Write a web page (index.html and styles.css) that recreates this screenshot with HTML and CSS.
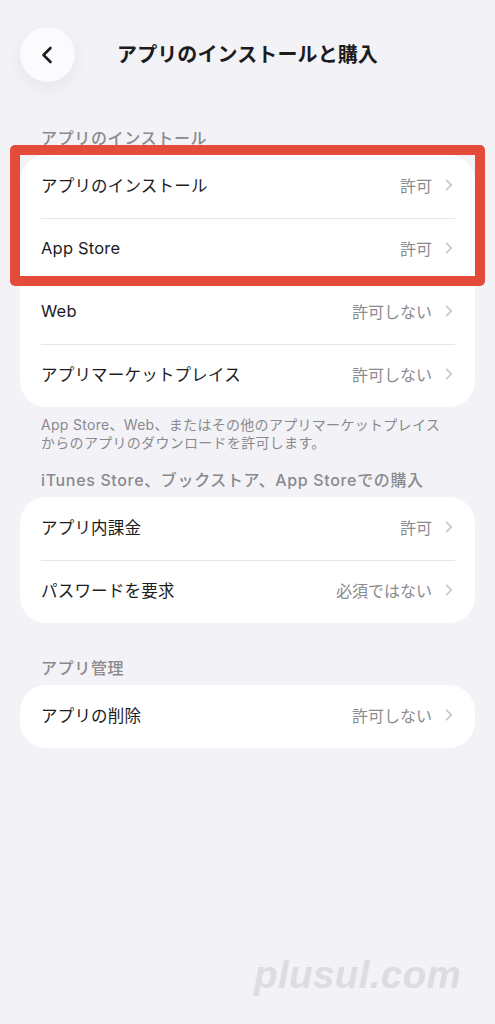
FILE: index.html
```html
<!DOCTYPE html>
<html lang="ja">
<head>
<meta charset="utf-8">
<link rel="stylesheet" href="styles.css">
</head>
<body>
<div class="page">
  <header class="topbar">
    <div class="back">
      <svg width="14" height="18" viewBox="0 0 14 18"><path d="M10.5 2 L3.5 9 L10.5 16" fill="none" stroke="#1c1c1e" stroke-width="2.6" stroke-linecap="round" stroke-linejoin="round"/></svg>
    </div>
    <h1 class="title">アプリのインストールと購入</h1>
    <div></div>
  </header>

  <div class="section first">
    <div class="label">アプリのインストール</div>
    <div class="card-wrap">
      <div class="card">
        <div class="row"><span class="name">アプリのインストール</span><span class="value">許可</span><svg class="chev" width="8" height="12" viewBox="0 0 8 12"><path d="M1.5 1.2 L6.3 6 L1.5 10.8" fill="none" stroke="#c4c4c7" stroke-width="1.6" stroke-linecap="round" stroke-linejoin="round"/></svg></div>
        <div class="row"><span class="name">App Store</span><span class="value">許可</span><svg class="chev" width="8" height="12" viewBox="0 0 8 12"><path d="M1.5 1.2 L6.3 6 L1.5 10.8" fill="none" stroke="#c4c4c7" stroke-width="1.6" stroke-linecap="round" stroke-linejoin="round"/></svg></div>
        <div class="row"><span class="name">Web</span><span class="value">許可しない</span><svg class="chev" width="8" height="12" viewBox="0 0 8 12"><path d="M1.5 1.2 L6.3 6 L1.5 10.8" fill="none" stroke="#c4c4c7" stroke-width="1.6" stroke-linecap="round" stroke-linejoin="round"/></svg></div>
        <div class="row"><span class="name">アプリマーケットプレイス</span><span class="value">許可しない</span><svg class="chev" width="8" height="12" viewBox="0 0 8 12"><path d="M1.5 1.2 L6.3 6 L1.5 10.8" fill="none" stroke="#c4c4c7" stroke-width="1.6" stroke-linecap="round" stroke-linejoin="round"/></svg></div>
      </div>
      <div class="highlight"></div>
    </div>
    <p class="note">App Store、Web、またはその他のアプリマーケットプレイスからのアプリのダウンロードを許可します。</p>
  </div>

  <div class="section second">
    <div class="label">iTunes Store、ブックストア、App Storeでの購入</div>
    <div class="card">
      <div class="row"><span class="name">アプリ内課金</span><span class="value">許可</span><svg class="chev" width="8" height="12" viewBox="0 0 8 12"><path d="M1.5 1.2 L6.3 6 L1.5 10.8" fill="none" stroke="#c4c4c7" stroke-width="1.6" stroke-linecap="round" stroke-linejoin="round"/></svg></div>
      <div class="row"><span class="name">パスワードを要求</span><span class="value">必須ではない</span><svg class="chev" width="8" height="12" viewBox="0 0 8 12"><path d="M1.5 1.2 L6.3 6 L1.5 10.8" fill="none" stroke="#c4c4c7" stroke-width="1.6" stroke-linecap="round" stroke-linejoin="round"/></svg></div>
    </div>
  </div>

  <div class="section third">
    <div class="label">アプリ管理</div>
    <div class="card">
      <div class="row"><span class="name">アプリの削除</span><span class="value">許可しない</span><svg class="chev" width="8" height="12" viewBox="0 0 8 12"><path d="M1.5 1.2 L6.3 6 L1.5 10.8" fill="none" stroke="#c4c4c7" stroke-width="1.6" stroke-linecap="round" stroke-linejoin="round"/></svg></div>
    </div>
  </div>

  <div class="watermark">plusul.com</div>
</div>
</body>
</html>
```

FILE: styles.css
```css
* { box-sizing: border-box; }
html, body { margin: 0; padding: 0; }
body {
  background: #f2f2f7;
  font-family: Inter, "Noto Sans CJK JP", sans-serif;
  color: #1c1c1e;
}
.page {
  position: relative;
  width: 495px;
  height: 1024px;
  overflow: hidden;
}
.topbar {
  display: grid;
  grid-template-columns: 55px 1fr 55px;
  align-items: center;
  padding: 27px 20px 0;
  height: 82px;
}
.back {
  width: 55px;
  height: 55px;
  border-radius: 50%;
  background: #fbfbfd;
  box-shadow: 0 6px 18px rgba(0, 0, 0, 0.06);
  display: flex;
  align-items: center;
  justify-content: center;
  padding-right: 2px;
}
.title {
  margin: 0;
  text-align: center;
  font-size: 20px;
  font-weight: 700;
  letter-spacing: 0.1px;
  line-height: 26px;
}
.section { padding: 0 20px; }
.section.first { margin-top: 46px; }
.section.second { margin-top: 18px; }
.section.third { margin-top: 35px; }
.label {
  padding-left: 21px;
  font-size: 16px;
  line-height: 20px;
  font-weight: 500;
  color: #8a8a8e;
  margin-bottom: 7px;
  white-space: nowrap;
  letter-spacing: 0.65px;
}
.card-wrap { position: relative; }
.card {
  background: #ffffff;
  border-radius: 26px;
  overflow: hidden;
}
.row {
  display: flex;
  align-items: center;
  height: 63px;
  margin-left: 21px;
  padding-right: 22px;
  padding-bottom: 3px;
  position: relative;
}
.row + .row::before {
  content: "";
  position: absolute;
  top: -0.5px;
  left: 0;
  right: 20px;
  height: 1px;
  background: #e6e6ea;
}
.name {
  flex: 1;
  font-size: 16.5px;
  font-weight: 400;
  color: #1c1c1e;
  white-space: nowrap;
  letter-spacing: 0.2px;
}
.value {
  font-size: 16px;
  color: #8a8a8e;
  margin-right: 13px;
  white-space: nowrap;
}
.chev { display: block; }
.note {
  margin: 9px 0 0;
  padding-left: 21px;
  font-size: 14px;
  line-height: 18px;
  color: #8a8a8e;
  width: 430px;
  letter-spacing: 0.3px;
}
.highlight {
  position: absolute;
  left: -10px;
  right: -10px;
  top: -10px;
  height: 141px;
  border: 10px solid #e44b3b;
  border-radius: 5px;
  pointer-events: none;
}
.watermark {
  position: absolute;
  left: 254px;
  top: 953px;
  font-family: "Liberation Sans", Arial, sans-serif;
  font-style: italic;
  font-weight: 700;
  font-size: 38.5px;
  color: #dddde1;
  letter-spacing: 0.4px;
}
```
